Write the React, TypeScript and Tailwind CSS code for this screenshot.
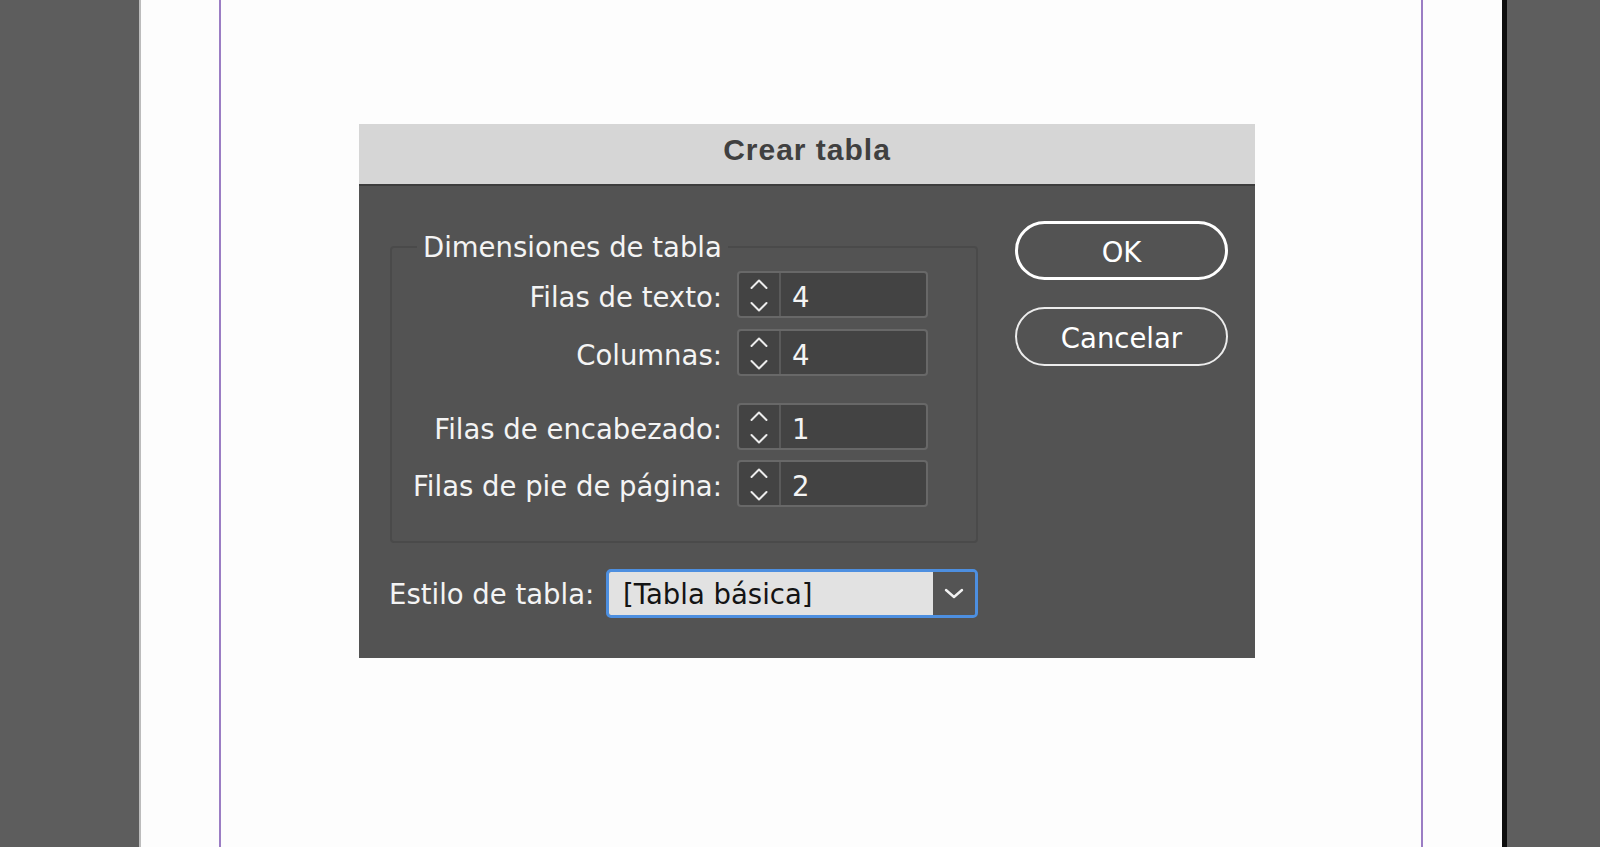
import React from "react";

const ui = { fontFamily: '"DejaVu Sans", Verdana, sans-serif' };

type Row = { label: string; value: string; gap: string };

const rows: Row[] = [
  { label: "Filas de texto:", value: "4", gap: "mt-[8px]" },
  { label: "Columnas:", value: "4", gap: "mt-[11px]" },
  { label: "Filas de encabezado:", value: "1", gap: "mt-[26px]" },
  { label: "Filas de pie de página:", value: "2", gap: "mt-[10px]" },
];

const StepArrows = () => (
  <svg width="18" height="43" viewBox="0 0 18 43" fill="none" stroke="#ececec" strokeWidth="2" strokeLinecap="round" strokeLinejoin="round">
    <polyline points="1.5,15 9,7.5 16.5,15" />
    <polyline points="1.5,30 9,37.5 16.5,30" />
  </svg>
);

const Stepper = ({ value }: { value: string }) => (
  <div className="flex h-[47px] w-[191px] overflow-hidden rounded-[4px] border-2 border-[#686868] bg-[#434343]">
    <div className="flex w-[42px] shrink-0 items-center justify-center border-r-2 border-[#5a5a5a]">
      <StepArrows />
    </div>
    <span className="flex items-center pl-[11px] pt-[6px] text-[27.5px] text-[#f4f4f4]">{value}</span>
  </div>
);

export default function App() {
  return (
    <div className="relative flex h-[847px] w-[1600px] overflow-hidden" style={ui}>
      {/* pasteboard + page */}
      <div className="w-[139px] shrink-0 bg-[#5d5d5d]" />
      <div className="flex flex-1 border-l-2 border-[#bcbcbc] bg-[#fdfdfd]">
        <div className="ml-[78px] w-[1204px] border-x-2 border-[#9b7dc4]" />
      </div>
      <div className="w-[5px] shrink-0 bg-[#0e0e0e]" />
      <div className="w-[93px] shrink-0 bg-[#5e5e5e]" />

      {/* modal dialog */}
      <div className="absolute left-[359px] top-[124px] flex h-[534px] w-[896px] flex-col bg-[#535353]">
        <div className="flex h-[62px] shrink-0 items-center justify-center border-b-2 border-[#3d3d3d] bg-[#d6d6d6] pb-[10px]">
          <span
            className="text-[30px] font-bold tracking-[1px] text-[#404040]"
            style={{ fontFamily: '"Liberation Sans", Arial, sans-serif' }}
          >
            Crear tabla
          </span>
        </div>

        <div className="flex flex-1 pl-[31px]">
          <div className="flex w-[588px] flex-col pt-[45px]">
            <fieldset className="m-0 rounded-[4px] border-2 border-[#4a4a4a] p-0 pb-[34px]">
              <legend className="ml-[25px] px-[6px] text-[27.5px] leading-[32px] text-[#f4f4f4]">
                Dimensiones de tabla
              </legend>
              <div className="flex flex-col">
                {rows.map((r) => (
                  <div key={r.label} className={`flex items-center gap-[15px] ${r.gap}`}>
                    <span className="w-[330px] pt-[6px] text-right text-[27.5px] text-[#f4f4f4]">{r.label}</span>
                    <Stepper value={r.value} />
                  </div>
                ))}
              </div>
            </fieldset>

            <div className="mt-[26px] flex items-center">
              <span className="-ml-px pt-[2px] text-[27.5px] text-[#f4f4f4]">Estilo de tabla:</span>
              <div className="ml-auto flex h-[49px] w-[372px] overflow-hidden rounded-[5px] border-[3px] border-[#4d8fe0]">
                <div className="flex flex-1 items-center bg-[#e2e2e2] pl-[14px] pt-[2px] text-[27.5px] text-[#141414]">
                  [Tabla básica]
                </div>
                <div className="flex w-[42px] items-center justify-center bg-[#545454]">
                  <svg width="20" height="11" viewBox="0 0 20 11" fill="none" stroke="#f2f2f2" strokeWidth="2.4" strokeLinecap="round" strokeLinejoin="round">
                    <polyline points="2,2 10,9 18,2" />
                  </svg>
                </div>
              </div>
            </div>
          </div>

          <div className="ml-[37px] flex flex-col gap-[27px] pt-[35px]">
            <button className="flex h-[59px] w-[213px] items-center justify-center rounded-full border-[3px] border-white pt-[5px] text-[27.5px] text-white">
              OK
            </button>
            <button className="flex h-[59px] w-[213px] items-center justify-center rounded-full border-2 border-[#ececec] pt-[5px] text-[27.5px] text-white">
              Cancelar
            </button>
          </div>
        </div>
      </div>
    </div>
  );
}
